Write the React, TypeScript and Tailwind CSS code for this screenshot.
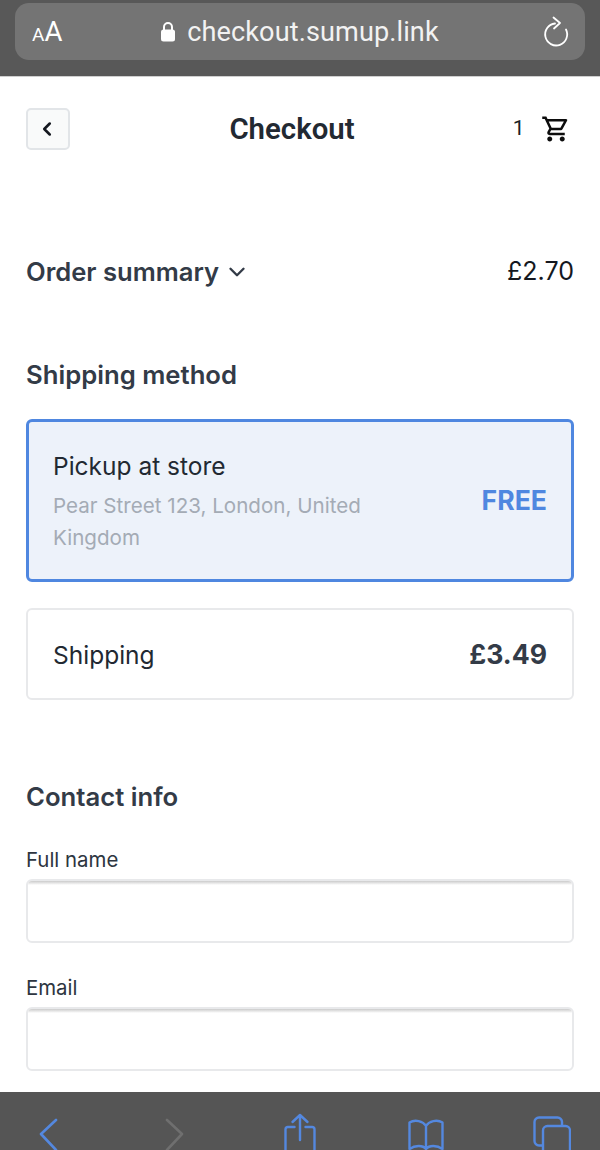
import React from "react";
import { ChevronLeft, ChevronDown } from "lucide-react";

const sans = "font-['Inter','Liberation_Sans',sans-serif]";

function Field({ label }: { label: string }) {
  return (
    <div className="flex flex-col">
      <label className="text-[20.4px] leading-[24px] text-[#2d3540] mb-[7px]">{label}</label>
      <div className="h-[64px] rounded-[6px] border-2 border-[#e8e9eb] bg-white overflow-hidden">
        <div className="h-[4px] bg-gradient-to-b from-[#cbcbcb] to-white" />
      </div>
    </div>
  );
}

export default function App() {
  return (
    <div className={`w-[600px] h-[1150px] overflow-hidden flex flex-col bg-white ${sans}`}>
      <div className="h-[77px] shrink-0 bg-[#585858] px-[15px] pt-[3px] border-b border-[#cfcfcf]">
        <div className="h-[57px] rounded-[14px] bg-[#747474] flex items-center justify-between pl-[17px] pr-[14px] text-white">
          <div className="font-['Roboto',sans-serif] flex items-baseline w-[46px]">
            <span className="text-[19px]">A</span>
            <span className="text-[27.5px]">A</span>
          </div>
          <div className="flex items-center gap-[11px]">
            <svg width="16" height="21" viewBox="0 0 16 21" fill="none">
              <path d="M4 9V6a4 4 0 0 1 8 0v3" stroke="white" strokeWidth="2" />
              <rect x="1" y="8.5" width="14" height="12" rx="2.5" fill="white" />
            </svg>
            <span className="font-['Roboto',sans-serif] text-[27.1px] leading-[34px] tracking-[0.1px] text-[#f2f2f2]">checkout.sumup.link</span>
          </div>
          <div className="w-[50px] flex justify-end">
            <svg width="28" height="32" viewBox="0 0 28 32" fill="none" stroke="white" strokeWidth="1.8" strokeLinecap="round" strokeLinejoin="round">
              <path d="M12 7.500a11 11 0 1 0 11 6" />
              <path d="M10.500 1.500 17 7l-6 5.500" />
            </svg>
          </div>
        </div>
      </div>

      <div className="flex-1 min-h-0 px-[26px] overflow-hidden">
        <div className="h-[105px] flex items-center justify-between relative">
          <button className="w-[44px] h-[42px] rounded-[5px] border-2 border-[#e2e5e8] bg-[#f9fafa] flex items-center justify-center text-[#14181f] -mt-[1px] pr-[3px]">
            <ChevronLeft size={22} strokeWidth={2.8} />
          </button>
          <h1 className="absolute left-0 right-0 pr-[16px] -mt-[1px] text-center text-[29.4px] leading-[34px] font-semibold text-[#222932] font-['Roboto',sans-serif] pointer-events-none">Checkout</h1>
          <div className="flex items-center gap-[16px] pr-[3.5px] -mt-[1px]">
            <span className="text-[21px] text-[#1a1f26] font-['Roboto',sans-serif]">1</span>
            <svg width="30" height="30" viewBox="0 0 24 24" fill="#0c0c0c">
              <path d="M15.550 13c.75 0 1.410-.41 1.750-1.030l3.580-6.490A.996.996 0 0 0 20.010 4H5.210l-.94-2H1v2h2l3.600 7.590-1.350 2.440C4.520 15.370 5.480 17 7 17h12v-2H7l1.100-2h7.450zM6.160 6h12.150l-2.760 5H8.530L6.160 6zM7 18c-1.100 0-1.990.9-1.990 2S5.900 22 7 22s2-.9 2-2-.9-2-2-2zm10 0c-1.100 0-1.990.9-1.990 2s.89 2 1.990 2 2-.9 2-2-.9-2-2-2z" />
            </svg>
          </div>
        </div>

        <div className="mt-[74px] flex items-center justify-between h-[32px]">
          <div className="flex items-center gap-[5px]">
            <h2 className="text-[25.6px] font-semibold text-[#333b47]">Order summary</h2>
            <ChevronDown size={26} strokeWidth={2.2} className="text-[#333b47]" />
          </div>
          <span className="text-[25px] text-[#14181f]">£2.70</span>
        </div>

        <h2 className="mt-[71px] text-[25.7px] leading-[32px] font-semibold text-[#333b47]">Shipping method</h2>

        <div className="mt-[28px] h-[163px] rounded-[6px] border-[3px] border-[#4f87e0] bg-[#edf2fa] flex items-center justify-between px-[24px]">
          <div className="w-[340px] pt-[2px]">
            <div className="text-[24.5px] leading-[32px] text-[#222932]">Pickup at store</div>
            <div className="mt-[8px] text-[20.6px] leading-[32px] text-[#a4abb5]">Pear Street 123, London, United Kingdom</div>
          </div>
          <span className="text-[26.6px] font-bold text-[#4f87e0] pt-[1px]">FREE</span>
        </div>

        <div className="mt-[26px] h-[92px] rounded-[6px] border-2 border-[#e8e9eb] flex items-center justify-between px-[25px] pt-[2px]">
          <span className="text-[24.5px] text-[#222932]">Shipping</span>
          <span className="text-[26.6px] font-bold text-[#333b47]">£3.49</span>
        </div>

        <h2 className="mt-[81px] text-[25.7px] leading-[32px] font-semibold text-[#333b47]">Contact info</h2>

        <div className="mt-[35px] flex flex-col gap-[33px]">
          <Field label="Full name" />
          <Field label="Email" />
        </div>
      </div>

      <div className="h-[58px] shrink-0 bg-[#555555] overflow-hidden flex items-start pl-[38px]">
        <svg width="20" height="40" viewBox="0 0 20 40" fill="none" stroke="#5488df" strokeWidth="2.6" strokeLinecap="round" strokeLinejoin="round" className="mt-[23px] shrink-0"><path d="M18 5 3 19l15 16" /></svg>
        <svg width="20" height="40" viewBox="0 0 20 40" fill="none" stroke="#6f6f6f" strokeWidth="2.6" strokeLinecap="round" strokeLinejoin="round" className="mt-[23px] ml-[106px] shrink-0"><path d="M3 5l15 14L3 35" /></svg>
        <svg width="32" height="40" viewBox="0 0 32 40" fill="none" stroke="#5488df" strokeWidth="2.4" strokeLinecap="round" strokeLinejoin="round" className="mt-[20px] ml-[100px] shrink-0"><path d="M16 3v25M8.500 10 16 3l7.500 7" /><path d="M10.500 15H4a2.500 2.500 0 0 0-2.500 2.500V40M21.500 15H28a2.500 2.500 0 0 1 2.500 2.500V40" /></svg>
        <svg width="36" height="40" viewBox="0 0 36 40" fill="none" stroke="#5488df" strokeWidth="2.4" strokeLinejoin="round" className="mt-[27px] ml-[92px] shrink-0"><path d="M18 7C15 2 7 0 1.500 3.500V30C7 26 15 26 18 30c3-4 11-4 16.500 0V3.500C29 0 21 2 18 7zM18 7v23" /></svg>
        <svg width="38" height="44" viewBox="0 0 38 44" fill="none" stroke="#5488df" strokeWidth="2.4" strokeLinejoin="round" className="mt-[24px] ml-[89px] shrink-0"><path d="M29 10V6a4.500 4.500 0 0 0-4.500-4.500H6A4.500 4.500 0 0 0 1.500 6v19A4.500 4.500 0 0 0 6 29.500h4" /><rect x="10" y="10" width="27" height="45" rx="4.500" /></svg>
      </div>
    </div>
  );
}
